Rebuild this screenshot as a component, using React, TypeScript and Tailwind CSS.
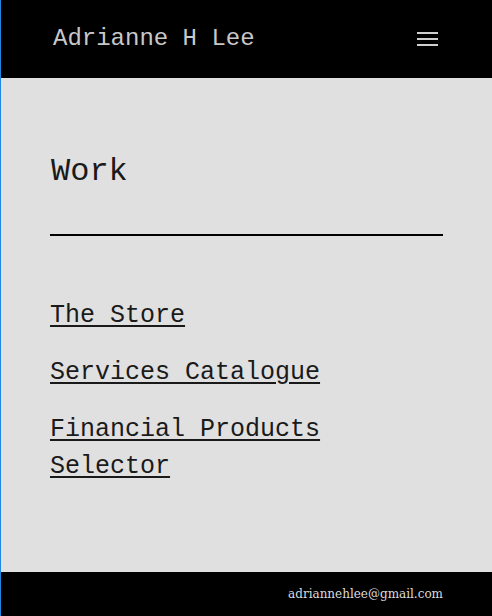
import React from 'react';

const mono = "font-['Liberation_Mono',monospace]";

const projects = ['The Store', 'Services Catalogue', 'Financial Products Selector'];

export default function App() {
  return (
    <div className="min-h-[616px] flex flex-col border-l border-[#1e88e5] bg-[#e0e0e0]">
      <header className="h-[78px] bg-black flex items-center justify-between pl-[52px] pr-[54px]">
        <span className={`${mono} text-[24px] text-[#c8c8c8]`}>Adrianne H Lee</span>
        <button type="button" className="w-[21px] flex flex-col gap-[4px]" aria-label="Menu">
          <span className="h-[2px] bg-[#cfcfcf] block" />
          <span className="h-[2px] bg-[#cfcfcf] block" />
          <span className="h-[2px] bg-[#cfcfcf] block" />
        </button>
      </header>

      <main className="flex-1 px-[49px] pt-[70px]">
        <h1 className={`${mono} text-[32px] leading-[48px] text-[#1a1a1a] pl-[1px]`}>Work</h1>
        <hr className="mt-[38px] border-0 h-[2px] bg-black" />
        <ul className="mt-[61px] flex flex-col gap-[20px]">
          {projects.map((p) => (
            <li key={p}>
              <a
                href="#"
                className={`${mono} text-[25px] leading-[37px] text-[#1a1a1a] underline decoration-2 underline-offset-[3px]`}
              >
                {p}
              </a>
            </li>
          ))}
        </ul>
      </main>

      <footer className="h-[44px] bg-black flex items-center justify-end px-[49px]">
        <span className="font-['DejaVu_Serif',serif] text-[12px] text-[#dcdcdc]">adriannehlee@gmail.com</span>
      </footer>
    </div>
  );
}
